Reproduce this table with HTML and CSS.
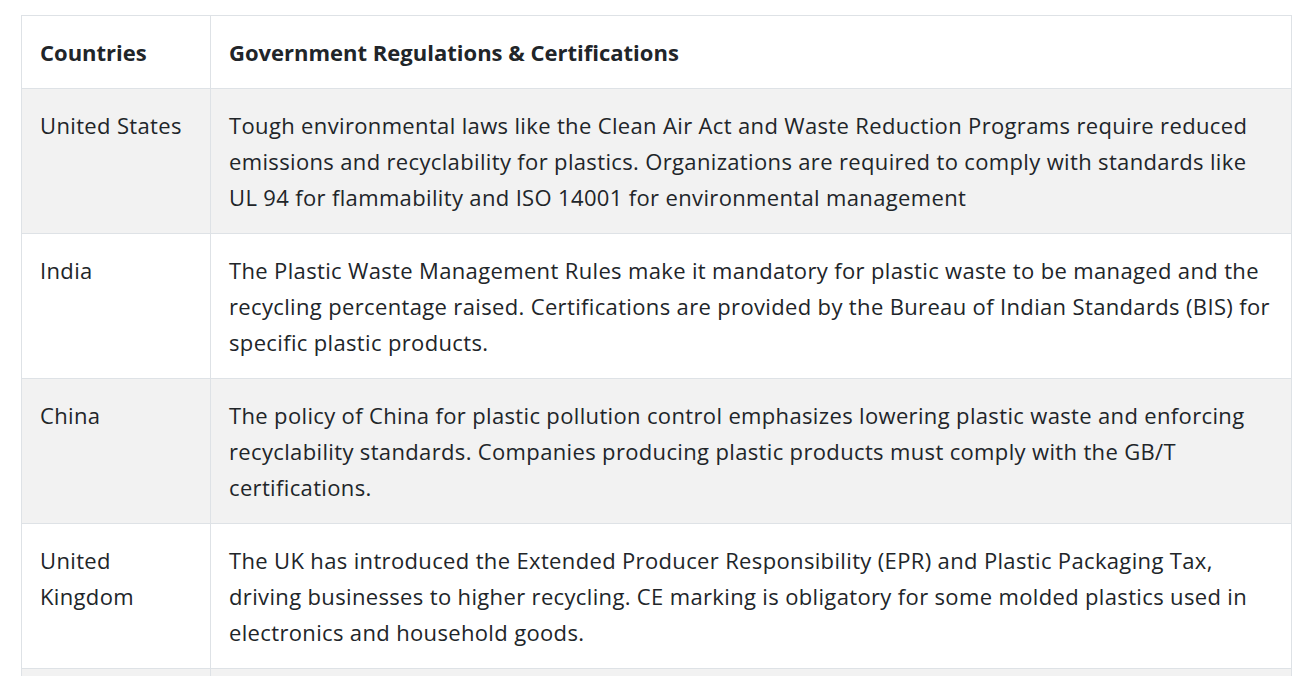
FILE: index.html
```html
<!DOCTYPE html>
<html lang="en">
<head>
    <meta charset="UTF-8">
    <title>Government Regulations</title>
    <link rel="stylesheet" href="styles.css">
</head>
<body>
    <div class="container">
        <table class="reg-table">
            <thead>
                <tr>
                    <th class="col-country">Countries</th>
                    <th>Government Regulations &amp; Certifications</th>
                </tr>
            </thead>
            <tbody>
                <tr>
                    <td>United States</td>
                    <td>Tough environmental laws like the Clean Air Act and Waste Reduction Programs require reduced emissions and recyclability for plastics. Organizations are required to comply with standards like UL 94 for flammability and ISO 14001 for environmental management</td>
                </tr>
                <tr>
                    <td>India</td>
                    <td>The Plastic Waste Management Rules make it mandatory for plastic waste to be managed and the recycling percentage raised. Certifications are provided by the Bureau of Indian Standards (BIS) for specific plastic products.</td>
                </tr>
                <tr>
                    <td>China</td>
                    <td>The policy of China for plastic pollution control emphasizes lowering plastic waste and enforcing recyclability standards. Companies producing plastic products must comply with the GB/T certifications.</td>
                </tr>
                <tr>
                    <td>United Kingdom</td>
                    <td>The UK has introduced the Extended Producer Responsibility (EPR) and Plastic Packaging Tax, driving businesses to higher recycling. CE marking is obligatory for some molded plastics used in electronics and household goods.</td>
                </tr>
                <!-- next row continues below the fold -->
                <tr class="row-more">
                    <td></td>
                    <td></td>
                </tr>
            </tbody>
        </table>
    </div>
</body>
</html>
```

FILE: styles.css
```css
* {
    margin: 0;
    padding: 0;
    box-sizing: border-box;
}

body {
    font-family: 'Open Sans', 'Noto Sans', sans-serif;
    background-color: #fff;
    color: #212529;
}

.container {
    padding: 15px 20px 0 21px;
}

.reg-table {
    width: 100%;
    border-collapse: collapse;
    font-size: 22px;
    line-height: 36px;
    letter-spacing: 0.35px;
}

.reg-table th,
.reg-table td {
    border: 1px solid #dee2e6;
    padding: 18px;
    text-align: left;
    vertical-align: top;
}

.reg-table th {
    font-weight: bold;
    letter-spacing: 0;
}

.col-country {
    width: 189px;
}

.reg-table tbody tr:nth-child(odd) {
    background-color: #f2f2f2; /* zebra */
}

.row-more td {
    height: 72px;
}
```
